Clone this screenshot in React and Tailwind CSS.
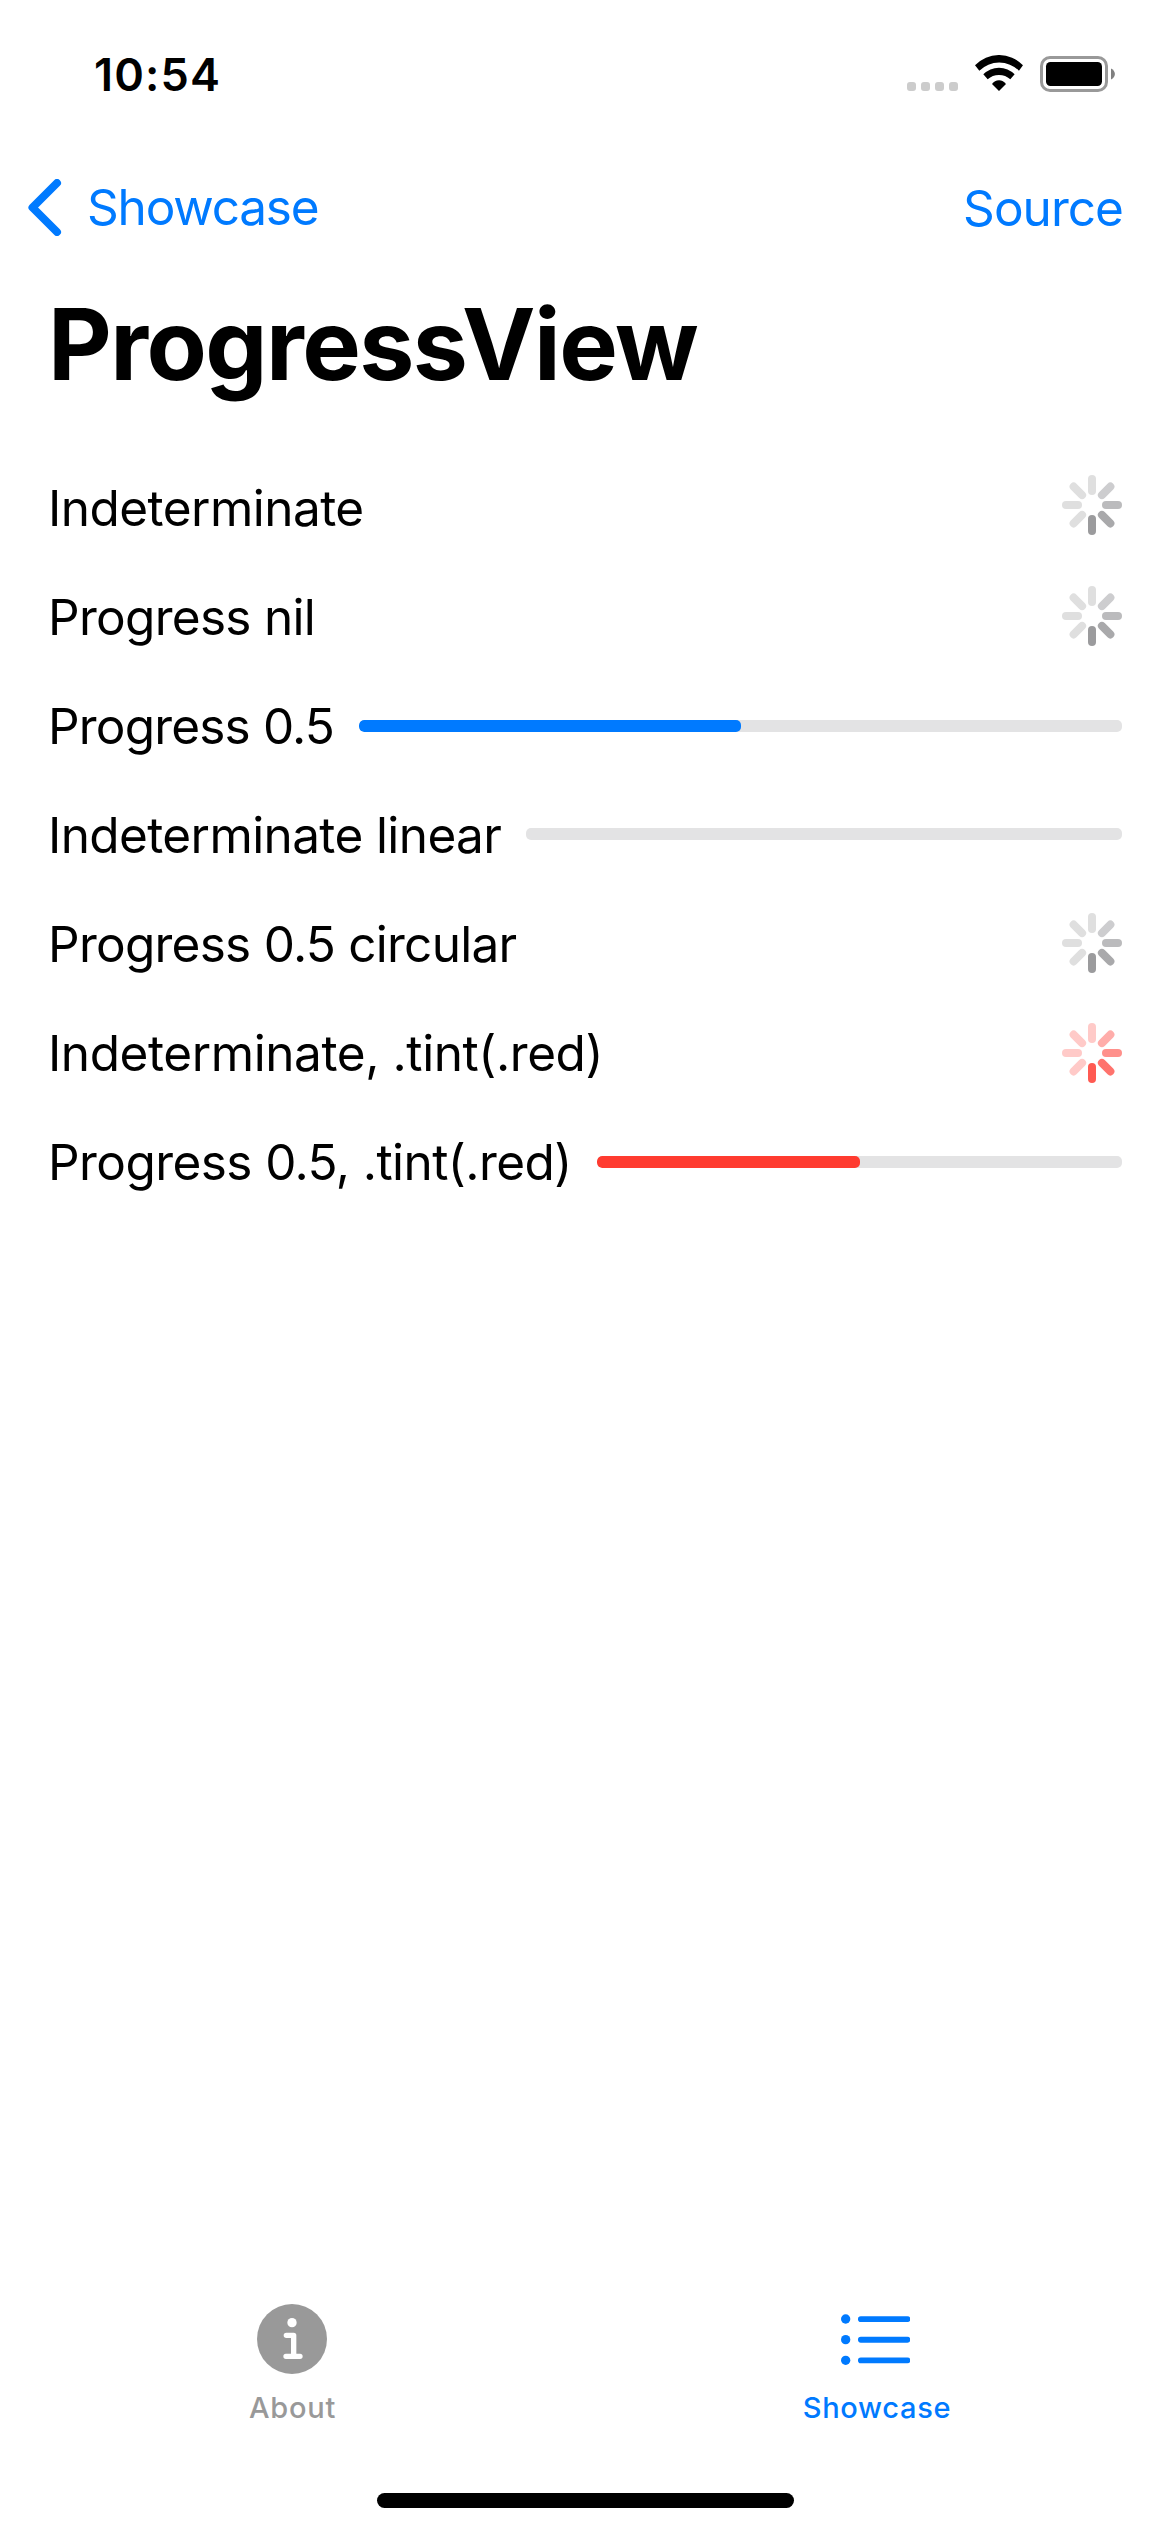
const GRAY = ["#dfdfdf", "#cdcdcf", "#bbbbbd", "#a9a9ab", "#9b9b9d", "#dfdfdf", "#dfdfdf", "#dfdfdf"];
const RED = ["#ffcac8", "#ffadaa", "#ff908b", "#ff736d", "#ff5a52", "#ffcac8", "#ffcac8", "#ffcac8"];

function Spinner({ colors = GRAY, className = "" }) {
  return (
    <svg viewBox="0 0 60 60" className={`size-[60px] shrink-0 ${className}`}>
      {colors.map((color, i) => (
        <rect key={i} x="26" y="0" width="8" height="20" rx="4" fill={color} transform={`rotate(${i * 45} 30 30)`} />
      ))}
    </svg>
  );
}

function Bar({ value = 0, className = "", fill = "bg-[#007aff]" }) {
  return (
    <div className={`h-3 shrink-0 overflow-hidden rounded-[5px] bg-[#e3e3e4] ${className}`}>
      {value > 0 && <div className={`h-full rounded-[5px] ${fill}`} style={{ width: `${value * 100}%` }} />}
    </div>
  );
}

function Row({ label, tracking, children }) {
  return (
    <div className="flex h-[109px] items-center justify-between">
      <span className={`text-[49.5px] leading-[60px] whitespace-nowrap ${tracking}`}>{label}</span>
      {children}
    </div>
  );
}

function StatusBar() {
  return (
    <div className="flex h-[149px] items-center justify-between pr-[55px] pl-[94px]">
      <span className="text-[45px] leading-[54px] font-semibold tracking-[1.159px]">10:54</span>
      <div className="mb-[2px] flex h-[37px] items-end">
        <div className="mb-[1px] flex gap-[5px]">
          {[0, 1, 2, 3].map((i) => (
            <span key={i} className="size-[9px] rounded-[3px] bg-[#cccccc]" />
          ))}
        </div>
        <svg viewBox="315 75 145 108" className="mb-[1px] ml-[17px] h-[36px] w-[48.3px]">
          <path d="M315 106A99 99 0 0 1 459 106L447 122A84.5 84.5 0 0 0 328 122Z" />
          <path d="M340 133A65 65 0 0 1 434 133L421 148A51 51 0 0 0 353 148Z" />
          <path d="M366 162A25.5 25.5 0 0 1 408 162L387 183Z" />
        </svg>
        <svg viewBox="0 0 75 36" className="ml-[16.7px] h-[36px] w-[75px]">
          <rect x="1.5" y="1.5" width="65" height="33" rx="8.5" fill="none" stroke="#999" strokeWidth="3" />
          <rect x="6" y="6" width="56" height="24" rx="4.5" />
          <path d="M71 12.5C76.2 15 76.2 21 71 23.5Z" fill="#808080" />
        </svg>
      </div>
    </div>
  );
}

export default function App() {
  return (
    <div className="flex h-[2532px] w-[1170px] flex-col bg-white font-[Inter,sans-serif] text-black">
      <StatusBar />
      <div className="flex h-[116px] items-center justify-between pr-[47px] pl-[28px] text-[49.5px] leading-[60px] text-[#007aff]">
        <div className="flex items-center">
          <svg viewBox="0 0 34 57" className="mr-[25px] h-[57px] w-[34px]">
            <path d="M29 4L4.5 28.5L29 53" fill="none" stroke="#007aff" strokeWidth="8" strokeLinecap="round" strokeLinejoin="round" />
          </svg>
          <span className="tracking-[-1.2px]">Showcase</span>
        </div>
        <span className="mt-[2px] tracking-[-0.96px]">Source</span>
      </div>
      <h1 className="h-[188px] pl-[48px] text-[98.5px] leading-[160px] font-bold tracking-[-1.55px]">ProgressView</h1>
      <div className="flex flex-1 flex-col px-[48px]">
        <Row label="Indeterminate" tracking="tracking-[-0.54px]">
          <Spinner className="mb-[5px]" />
        </Row>
        <Row label="Progress nil" tracking="tracking-[-0.704px]">
          <Spinner className="mb-[1px]" />
        </Row>
        <Row label="Progress 0.5" tracking="tracking-[-0.82px]">
          <Bar value={0.5} className="w-[763px]" />
        </Row>
        <Row label="Indeterminate linear" tracking="tracking-[-0.612px]">
          <Bar className="mb-[1px] w-[596px]" />
        </Row>
        <Row label="Progress 0.5 circular" tracking="tracking-[-0.739px]">
          <Spinner className="mb-[1px]" />
        </Row>
        <Row label="Indeterminate, .tint(.red)" tracking="tracking-[-0.42px]">
          <Spinner colors={RED} />
        </Row>
        <Row label="Progress 0.5, .tint(.red)" tracking="tracking-[-0.57px]">
          <Bar value={0.5} fill="bg-[#ff3b30]" className="w-[525px]" />
        </Row>
      </div>
      <div className="grid h-[189px] grid-cols-2 text-[29px] leading-[36px] font-medium">
        <div className="flex flex-col items-center text-[#999999]">
          <svg viewBox="110 72 210 210" className="mr-[1px] size-[70px]">
            <circle cx="215" cy="177" r="105" fill="#999999" />
            <circle cx="215" cy="128" r="14" fill="#fff" />
            <path d="M198 166H220V229M197 229H239" fill="none" stroke="#fff" strokeWidth="16" strokeLinecap="round" strokeLinejoin="round" />
          </svg>
          <span className="mt-[16px] tracking-[0.75px]">About</span>
        </div>
        <div className="flex flex-col items-center text-[#007aff]">
          <svg viewBox="183 72 208 210" className="mr-[4px] h-[70px] w-[69.3px]" fill="#007aff">
            {[117, 179, 241].map((y) => (
              <g key={y}>
                <circle cx="197" cy={y} r="14" />
                <rect x="234" y={y - 8.5} width="157" height="17.5" rx="8.5" />
              </g>
            ))}
          </svg>
          <span className="mt-[16px] mr-[1px] tracking-[0.674px]">Showcase</span>
        </div>
      </div>
      <div className="mb-[24px] h-[15px] w-[417px] self-center rounded-full bg-black" />
    </div>
  );
}
